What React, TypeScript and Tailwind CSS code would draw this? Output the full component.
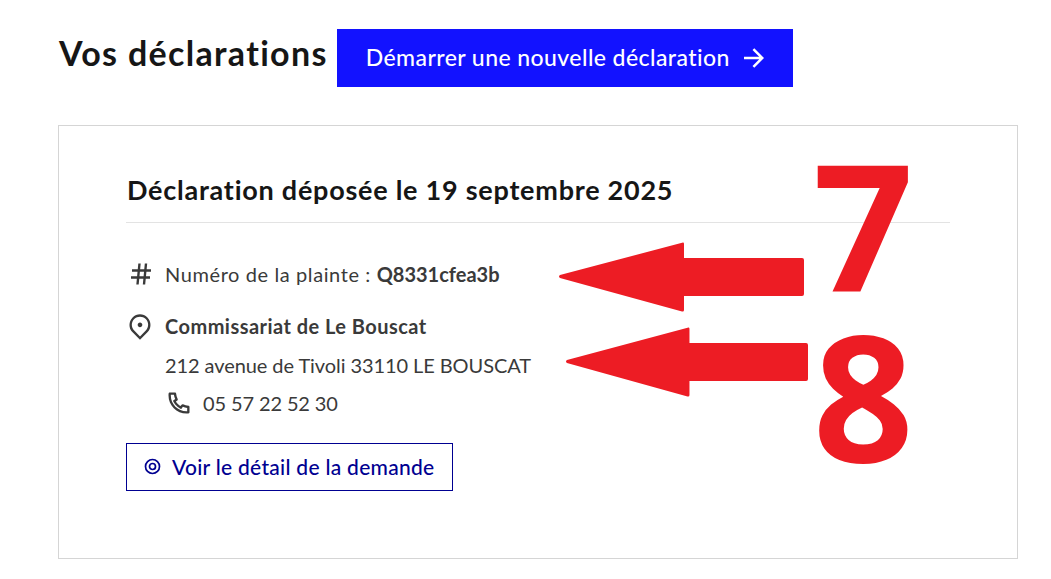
import { RiArrowRightLine, RiMapPin2Line, RiPhoneLine } from "react-icons/ri";

const font = { fontFamily: '"Lato", "Noto Sans", sans-serif' };

function Arrow({ className }: { className: string }) {
  return (
    <svg className={className} viewBox="0 0 245 70" preserveAspectRatio="none" fill="#ed1c24">
      <path d="M1 33 L124 0.5 Q125 0 125 2 V16 H243 Q245 16 245 18 V52 Q245 54 243 54 H125 V68 Q125 70 123 69.5 L1 36 Q-1 34.5 1 33 Z" />
    </svg>
  );
}

export default function App() {
  return (
    <div className="relative w-[1051px] h-[579px] overflow-hidden bg-white text-[#3a3a3a] font-['Lato','Noto_Sans',sans-serif]" style={font}>
      <div className="flex flex-col pl-[58px] pt-[29px] w-[1018px]">
        <div className="flex items-start">
          <h1 className="ml-px mr-[9px] text-[34px] leading-[48px] font-bold text-[#161616] tracking-[1.32px] whitespace-nowrap">Vos déclarations</h1>
          <button className="flex items-center h-[58px] w-[456px] pl-[29px] pb-[1px] gap-[9px] bg-[#1212ff] text-white text-[23px] font-medium tracking-[0.42px] whitespace-nowrap">
            Démarrer une nouvelle déclaration
            <RiArrowRightLine className="w-[30px] h-[30px]" />
          </button>
        </div>
        <div className="mt-[38px] h-[434px] border border-[#d5d5d5] pl-[67px] pr-[67px] pt-[44px]">
          <h2 className="pl-px pb-[13px] text-[27px] leading-[39px] font-bold text-[#161616] border-b border-[#e3e3e3] tracking-[0.75px] whitespace-nowrap">
            Déclaration déposée le 19 septembre 2025
          </h2>
          <div className="flex items-center gap-[12px] mt-[36px] text-[20px] leading-[30px]">
            <svg className="w-[24px] h-[24px] ml-[3px]" viewBox="0 0 24 24" fill="none" stroke="currentColor" strokeWidth="2.4">
              <path d="M3 8.5H22M2 15.5H21M10.5 1.5L8.5 22.5M17 1.5L15 22.5" />
            </svg>
            <span className="tracking-[0.6px]">Numéro de la plainte : <b className="font-bold tracking-normal">Q8331cfea3b</b></span>
          </div>
          <div className="flex items-center gap-[11px] mt-[22px] text-[20px] leading-[30px]">
            <RiMapPin2Line className="w-[28px] h-[28px]" />
            <b className="font-bold tracking-[0.46px]">Commissariat de Le Bouscat</b>
          </div>
          <div className="pl-[39px] mt-[9px] text-[20px] leading-[30px] tracking-[-0.08px]">212 avenue de Tivoli 33110 LE BOUSCAT</div>
          <div className="flex items-center gap-[10px] pl-[39px] mt-[8px] text-[20px] leading-[30px]">
            <RiPhoneLine className="w-[28px] h-[28px]" />
            <span className="tracking-[-0.12px]">05 57 22 52 30</span>
          </div>
          <button className="flex items-center gap-[11px] mt-[25px] pl-[17px] pb-[1px] w-[327px] h-[48px] border border-[#000091] text-[#000091] text-[21px] font-medium tracking-[0.28px] whitespace-nowrap">
            <svg className="w-[17px] h-[17px]" viewBox="0 0 17 17" fill="none" stroke="currentColor" strokeWidth="1.7">
              <circle cx="8.5" cy="8.5" r="7" />
              <circle cx="8.5" cy="8.5" r="3" />
            </svg>
            Voir le détail de la demande
          </button>
        </div>
      </div>
      <Arrow className="absolute left-[559px] top-[242px] w-[245px] h-[70px]" />
      <Arrow className="absolute left-[566px] top-[327px] w-[242px] h-[70px]" />
      <span className="absolute left-[813px] top-[138px] w-[110px] text-[176px] leading-[171px] font-bold text-[#ed1c24]" style={{ fontFamily: '"Open Sans", sans-serif' }}>7<br />8</span>
    </div>
  );
}
